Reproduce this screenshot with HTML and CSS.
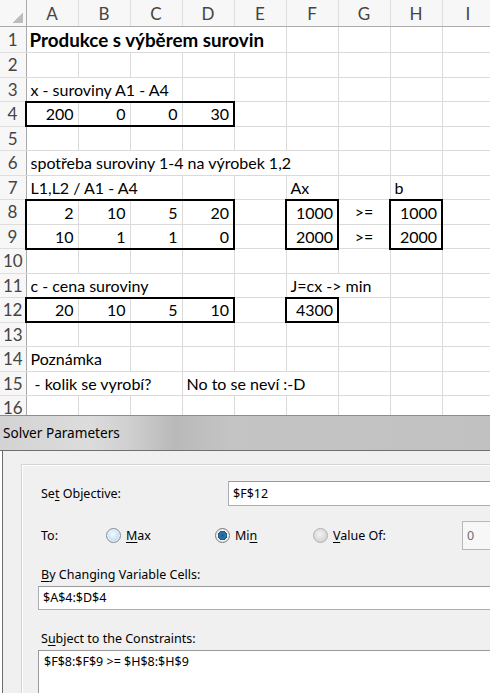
FILE: index.html
```html
<!DOCTYPE html>
<html lang="cs">
<head>
    <meta charset="UTF-8">
    <meta name="viewport" content="width=device-width, initial-scale=1.0">
    <title>Produkce s výběrem surovin - Solver</title>
    <link rel="stylesheet" href="styles.css">
</head>
<body>

    <div class="sheet">
        <table class="grid">
            <colgroup>
                <col class="rn">
                <col><col><col><col><col><col><col><col><col>
            </colgroup>
            <thead>
                <tr>
                    <th class="corner"></th>
                    <th>A</th><th>B</th><th>C</th><th>D</th><th>E</th><th>F</th><th>G</th><th>H</th><th>I</th>
                </tr>
            </thead>
            <tbody>
                <tr class="r1">
                    <th>1</th>
                    <td colspan="5" class="title">Produkce s výběrem surovin</td>
                    <td></td><td></td><td></td><td></td>
                </tr>
                <tr>
                    <th>2</th>
                    <td></td><td></td><td></td><td></td><td></td><td></td><td></td><td></td><td></td>
                </tr>
                <tr>
                    <th>3</th>
                    <td colspan="3">x - suroviny A1 - A4</td>
                    <td></td><td></td><td></td><td></td><td></td><td></td>
                </tr>
                <tr>
                    <th>4</th>
                    <td class="num t b l">200</td>
                    <td class="num t b">0</td>
                    <td class="num t b">0</td>
                    <td class="num t b r">30</td>
                    <td></td><td></td><td></td><td></td><td></td>
                </tr>
                <tr>
                    <th>5</th>
                    <td></td><td></td><td></td><td></td><td></td><td></td><td></td><td></td><td></td>
                </tr>
                <tr>
                    <th>6</th>
                    <td colspan="6">spotřeba suroviny 1-4 na výrobek 1,2</td>
                    <td></td><td></td><td></td>
                </tr>
                <tr>
                    <th>7</th>
                    <td colspan="3">L1,L2 / A1 - A4</td>
                    <td></td><td></td>
                    <td>Ax</td>
                    <td></td>
                    <td>b</td>
                    <td></td>
                </tr>
                <tr>
                    <th>8</th>
                    <td class="num t l">2</td>
                    <td class="num t">10</td>
                    <td class="num t">5</td>
                    <td class="num t r">20</td>
                    <td></td>
                    <td class="num t l r">1000</td>
                    <td class="mid">&gt;=</td>
                    <td class="num t l r">1000</td>
                    <td></td>
                </tr>
                <tr>
                    <th>9</th>
                    <td class="num b l">10</td>
                    <td class="num b">1</td>
                    <td class="num b">1</td>
                    <td class="num b r">0</td>
                    <td></td>
                    <td class="num b l r">2000</td>
                    <td class="mid">&gt;=</td>
                    <td class="num b l r">2000</td>
                    <td></td>
                </tr>
                <tr>
                    <th>10</th>
                    <td></td><td></td><td></td><td></td><td></td><td></td><td></td><td></td><td></td>
                </tr>
                <tr>
                    <th>11</th>
                    <td colspan="3">c - cena suroviny</td>
                    <td></td><td></td>
                    <td colspan="2">J=cx -&gt; min</td>
                    <td></td><td></td>
                </tr>
                <tr>
                    <th>12</th>
                    <td class="num t b l">20</td>
                    <td class="num t b">10</td>
                    <td class="num t b">5</td>
                    <td class="num t b r">10</td>
                    <td></td>
                    <td class="num t b l r">4300</td>
                    <td></td><td></td><td></td>
                </tr>
                <tr>
                    <th>13</th>
                    <td></td><td></td><td></td><td></td><td></td><td></td><td></td><td></td><td></td>
                </tr>
                <tr>
                    <th>14</th>
                    <td colspan="2">Poznámka</td>
                    <td></td><td></td><td></td><td></td><td></td><td></td><td></td>
                </tr>
                <tr>
                    <th>15</th>
                    <td colspan="3">&nbsp;- kolik se vyrobí?</td>
                    <td colspan="3">No to se neví :-D</td>
                    <td></td><td></td><td></td>
                </tr>
                <tr>
                    <th>16</th>
                    <td></td><td></td><td></td><td></td><td></td><td></td><td></td><td></td><td></td>
                </tr>
            </tbody>
        </table>
    </div>

    <div class="dialog">
        <div class="titlebar">Solver Parameters</div>
        <div class="dlg-body">
            <div class="panel">
                <div class="objective-row">
                    <span class="lbl obj-lbl">Se<u>t</u> Objective:</span>
                    <div class="textbox">$F$12</div>
                </div>

                <div class="to-row">
                    <span class="lbl to-lbl">To:</span>
                    <span class="opt opt-max"><span class="radio"></span><span><u>M</u>ax</span></span>
                    <span class="opt opt-min"><span class="radio checked"></span><span>Mi<u>n</u></span></span>
                    <span class="opt opt-val"><span class="radio off"></span><span><u>V</u>alue Of:</span></span>
                    <div class="textbox value-box">0</div>
                </div>

                <div class="lbl caption"><u>B</u>y Changing Variable Cells:</div>
                <div class="textbox wide">$A$4:$D$4</div>

                <div class="lbl caption constraints-lbl">S<u>u</u>bject to the Constraints:</div>
                <div class="listbox">$F$8:$F$9 &gt;= $H$8:$H$9</div>
            </div>
        </div>
    </div>

</body>
</html>
```

FILE: styles.css
```css
body {
    margin: 0;
    padding: 0;
    width: 490px;
    height: 693px;
    overflow: hidden;
    background: #fff;
}

.sheet {
    height: 415px;
    overflow: hidden;
}

.grid {
    border-collapse: collapse;
    table-layout: fixed;
    width: 494px;
    font-family: Lato, sans-serif;
    font-size: 16px;
    color: #000;
}

.grid col {
    width: 52px;
}

.grid col.rn {
    width: 26px;
}

.grid thead th {
    height: 26px;
    padding: 0;
    background: #f7f7f7;
    color: #444;
    font-weight: normal;
    font-size: 17px;
    border-right: 1px solid #dedede;
    border-bottom: 1px solid #ababab;
}

.grid thead th.corner {
    border-right: 1px solid #ababab;
    background: linear-gradient(to top left, #bcbcbc 0 50%, transparent 50%) no-repeat right 3px bottom 3px / 11px 11px, #f7f7f7;
}

.grid tbody tr {
    height: 24.5px;
}

.grid tbody tr.r1 {
    height: 26px;
}

.grid tbody th {
    padding: 0;
    background: #f7f7f7;
    color: #444;
    font-weight: normal;
    font-size: 17px;
    text-align: center;
    border-right: 1px solid #ababab;
    border-bottom: 1px solid #dedede;
}

.grid td {
    padding: 0 4px;
    border: 1px solid #dadada;
    white-space: nowrap;
    overflow: hidden;
}

.grid td.title {
    font-weight: bold;
    font-size: 18.8px;
    padding-left: 3px;
}

.grid td.num {
    text-align: right;
}

.grid td.mid {
    text-align: center;
}

.grid td.t { border-top: 2px solid #000; }
.grid td.b { border-bottom: 2px solid #000; }
.grid td.l { border-left: 2px solid #000; }
.grid td.r { border-right: 2px solid #000; }

/* solver dialog */

.dialog {
    width: 640px;
    font-family: "Noto Sans", sans-serif;
    font-size: 12.5px;
    color: #000;
}

.titlebar {
    height: 34px;
    line-height: 34px;
    padding-left: 3px;
    font-size: 13.6px;
    border-top: 1px solid #8d8d8d;
    border-bottom: 1px solid #6f6f6f;
    background: linear-gradient(90deg, #d3d3d3 0, #dcdcdc 90px, #cfcfcf 130px, #b9b9b9 175px, #c4c4c4 230px, #bfbfbf 640px);
}

.dlg-body {
    margin-left: 2px;
    border-left: 1px solid #6c6c6c;
    background: #f0f0f0;
    padding: 13px 0 0 18px;
    height: 260px;
}

.panel {
    border-top: 1px solid #d5d5d5;
    border-left: 1px solid #d5d5d5;
    box-shadow: inset 1px 1px 0 #fff;
    padding: 16px 0 0 16px;
    height: 240px;
}

.lbl {
    padding-left: 3px;
}

.objective-row {
    display: flex;
    align-items: center;
    height: 25px;
}

.obj-lbl {
    width: 187px;
}

.textbox {
    flex: 1;
    height: 23px;
    line-height: 23px;
    padding-left: 4px;
    background: #fff;
    border: 1px solid #abadb3;
    border-top-color: #9a9a9a;
}

.to-row {
    display: flex;
    align-items: center;
    height: 29px;
    margin-top: 15px;
}

.to-lbl {
    width: 65px;
}

.opt {
    display: flex;
    align-items: center;
    gap: 5px;
}

.opt-max { width: 109px; }
.opt-min { width: 98px; }
.opt-val { width: 149px; }

.radio {
    width: 13px;
    height: 13px;
    border-radius: 50%;
    border: 1px solid #8a8c8f;
    background: radial-gradient(circle at 45% 40%, #f4fbff 0, #cfe8f8 45%, #a5d1f0 100%);
    box-shadow: inset 0 0 0 1px #e8f4fc;
}

.radio.checked {
    border-color: #7a7a7a;
    background: radial-gradient(circle at 50% 50%, #1e5a8c 0, #2d78b4 3px, #1c4f7c 4.5px, #f2f2f2 5px, #e4e4e4 100%);
    box-shadow: none;
}

.radio.off {
    border-color: #b1b1b1;
    background: radial-gradient(circle at 45% 40%, #f3f3f3 0, #dedede 50%, #c9c9c9 100%);
    box-shadow: none;
}

.value-box {
    height: 27px;
    line-height: 27px;
    color: #6d6d6d;
    background: #f7f7f7;
    border-color: #b8b8b8;
}

.caption {
    height: 20px;
    line-height: 20px;
    margin-top: 15px;
}

.wide {
    flex: none;
    height: 22px;
    line-height: 22px;
    margin-top: 1px;
}

.constraints-lbl {
    margin-top: 19px;
}

.listbox {
    margin-top: 1px;
    height: 60px;
    padding: 2px 0 0 5px;
    background: #fff;
    border: 1px solid #9a9a9a;
    line-height: 18px;
}

u {
    text-underline-offset: 2px;
}
```
